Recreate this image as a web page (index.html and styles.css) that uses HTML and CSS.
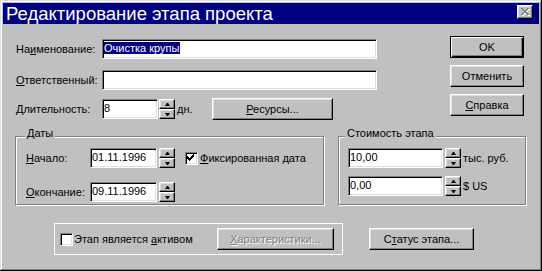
FILE: index.html
```html
<!DOCTYPE html>
<html>
<head>
  <meta charset="utf-8">
  <title>Редактирование этапа проекта</title>
  <link rel="stylesheet" href="styles.css">
</head>
<body>
  <div class="window">
    <div class="titlebar">
      <span class="title">Редактирование этапа проекта</span>
      <span class="close-btn">
        <svg width="14" height="12" viewBox="0 0 14 12" shape-rendering="crispEdges">
          <path fill="#fff" transform="translate(1,1)" d="M3 2h2v1h-2z M9 2h2v1h-2z M4 3h2v1h-2z M8 3h2v1h-2z M5 4h4v1h-4z M6 5h2v1h-2z M5 6h4v1h-4z M4 7h2v1h-2z M8 7h2v1h-2z M3 8h2v1h-2z M9 8h2v1h-2z"/>
          <path fill="#808080" d="M3 2h2v1h-2z M9 2h2v1h-2z M4 3h2v1h-2z M8 3h2v1h-2z M5 4h4v1h-4z M6 5h2v1h-2z M5 6h4v1h-4z M4 7h2v1h-2z M8 7h2v1h-2z M3 8h2v1h-2z M9 8h2v1h-2z"/>
        </svg>
      </span>
    </div>

    <div class="content">
      <div class="top">
        <div class="fields">
          <div class="row">
            <span class="label">На<u>и</u>менование:</span>
            <div class="field field-wide"><span class="sel">Очистка крупы</span></div>
          </div>
          <div class="row">
            <span class="label"><u>О</u>тветственный:</span>
            <div class="field field-wide"></div>
          </div>
          <div class="row row-tall">
            <span class="label"><u>Д</u>лительность:</span>
            <div class="field field-days">8</div>
            <div class="spin"><span class="spin-btn up"></span><span class="spin-btn down"></span></div>
            <span class="unit unit-days">дн.</span>
            <button class="btn btn-res"><span><u>Р</u>есурсы...</span></button>
          </div>
        </div>
        <div class="buttons">
          <button class="btn btn-default">OK</button>
          <button class="btn">Отменить</button>
          <button class="btn"><span><u>С</u>правка</span></button>
        </div>
      </div>

      <div class="groups">
        <div class="group group-dates">
          <div class="group-title">Даты</div>
          <div class="group-row first">
            <span class="glabel"><u>Н</u>ачало:</span>
            <div class="field field-date">01.11.1996</div>
            <div class="spin"><span class="spin-btn up"></span><span class="spin-btn down"></span></div>
            <span class="check checked">
              <svg width="11" height="11" viewBox="0 0 11 11" shape-rendering="crispEdges">
                <path fill="#000" d="M8 2h1v1h-1z M7 3h2v1h-2z M2 4h1v1h-1z M6 4h3v1h-3z M2 5h2v1h-2z M5 5h3v1h-3z M2 6h5v1h-5z M3 7h3v1h-3z M4 8h1v1h-1z"/>
              </svg>
            </span>
            <span class="check-text"><u>Ф</u>иксированная дата</span>
          </div>
          <div class="group-row second">
            <span class="glabel"><u>О</u>кончание:</span>
            <div class="field field-date">09.11.1996</div>
            <div class="spin"><span class="spin-btn up"></span><span class="spin-btn down"></span></div>
          </div>
        </div>

        <div class="group group-cost">
          <div class="group-title">Стоимость этапа</div>
          <div class="group-row first">
            <div class="field field-money">10,00</div>
            <div class="spin"><span class="spin-btn up"></span><span class="spin-btn down"></span></div>
            <span class="unit">тыс. руб.</span>
          </div>
          <div class="group-row first">
            <div class="field field-money">0,00</div>
            <div class="spin"><span class="spin-btn up"></span><span class="spin-btn down"></span></div>
            <span class="unit">$ US</span>
          </div>
        </div>
      </div>

      <div class="bottom">
        <div class="frame">
          <span class="check"></span>
          <span class="check-text">Этап является <u>а</u>ктивом</span>
          <button class="btn btn-disabled btn-char"><span><u>Х</u>арактеристики...</span></button>
        </div>
        <button class="btn btn-status"><span>С<u>т</u>атус этапа...</span></button>
      </div>
    </div>
  </div>
</body>
</html>
```

FILE: styles.css
```css
body { margin: 0; font-family: "Liberation Sans", Arial, sans-serif; font-size: 11px; color: #000; background: #c0c0c0; }

.window {
  width: 542px;
  height: 271px;
  box-sizing: border-box;
  padding: 3px;
  background: #c0c0c0;
  box-shadow: inset -1px -1px #000, inset 1px 1px #dfdfdf, inset -2px -2px #808080, inset 2px 2px #fff;
}

/* title bar */
.titlebar { height: 21px; background: #000080; color: #fff; display: flex; align-items: flex-start; }
.title { font-size: 18.5px; line-height: 21px; padding-left: 3px; white-space: nowrap; }
.close-btn {
  margin: 2px 6px 0 auto;
  width: 16px;
  height: 14px;
  box-sizing: border-box;
  background: #c0c0c0;
  border: 1px solid;
  border-color: #fff #000 #000 #fff;
  box-shadow: inset -1px -1px #808080, inset 1px 1px #dfdfdf;
}
.close-btn svg { display: block; }

.content { padding: 0 13px 0 12px; }

/* top part: fields + dialog buttons */
.top { display: flex; justify-content: space-between; align-items: flex-start; margin-top: 12px; }
.fields { width: 362px; padding-top: 3px; }
.row { display: flex; align-items: center; height: 20px; }
.row + .row { margin-top: 11px; }
.row.row-tall { height: 22px; margin-top: 8px; }
.label { width: 87px; padding-left: 1px; box-sizing: border-box; white-space: nowrap; }

.field {
  height: 20px;
  box-sizing: border-box;
  background: #fff;
  border: 1px solid;
  border-color: #808080 #fff #fff #808080;
  box-shadow: inset 1px 1px #000, inset -1px -1px #dfdfdf;
  padding: 0 0 0 1px;
  line-height: 17px;
  white-space: nowrap;
  overflow: hidden;
  flex: none;
}
.field-wide { width: 275px; }
.field-days { width: 56px; }
.field-date { width: 67px; }
.field-money { width: 95px; }
.sel { background: #000080; color: #fff; padding-right: 1px; }

.spin { width: 16px; height: 20px; display: flex; flex-direction: column; margin-left: 2px; flex: none; }
.field-days + .spin { margin-left: 1px; }
.spin-btn {
  flex: 1;
  box-sizing: border-box;
  background: #c0c0c0;
  border: 1px solid;
  border-color: #fff #000 #000 #fff;
  box-shadow: inset -1px -1px #808080, inset 1px 1px #dfdfdf;
  display: flex;
  align-items: center;
  justify-content: center;
}
.spin-btn::after { content: ""; width: 1px; height: 0; border-left: 2px solid transparent; border-right: 2px solid transparent; }
.spin-btn.up::after { border-bottom: 3px solid #000; }
.spin-btn.down::after { border-top: 3px solid #000; }

.unit { margin-left: 2px; white-space: nowrap; }
.unit-days { width: 35px; }

.btn {
  height: 22px;
  box-sizing: border-box;
  background: #c0c0c0;
  border: 1px solid;
  border-color: #fff #000 #000 #fff;
  box-shadow: inset -1px -1px #808080, inset 1px 1px #dfdfdf;
  font: inherit;
  color: #000;
  padding: 0;
  display: flex;
  align-items: center;
  justify-content: center;
  flex: none;
}
.btn-default { border-color: #000; box-shadow: inset 1px 1px #fff, inset -1px -1px #000, inset -2px -2px #808080; }
.btn-disabled { color: #808080; text-shadow: 1px 1px #fff; }
.btn-res { width: 121px; }

.buttons { display: flex; flex-direction: column; gap: 7px; margin-right: 2px; }
.buttons .btn { width: 74px; }

/* group boxes */
.groups { display: flex; gap: 14px; margin-top: 16px; }
.group {
  height: 69px;
  box-sizing: border-box;
  border: 1px solid #808080;
  box-shadow: inset 1px 1px #fff, 1px 1px #fff;
}
.group-dates { width: 309px; }
.group-cost { width: 188px; }
.group-title { width: max-content; margin: -10px 0 0 9px; padding: 0 2px; background: #c0c0c0; line-height: 13px; }
.group-cost .group-title { margin-left: 6px; }

.group-row { display: flex; align-items: center; height: 20px; padding-left: 9px; }
.group-row.first { margin-top: 8px; }
.group-row.second { margin-top: 14px; }
.glabel { width: 64px; white-space: nowrap; }
.group-dates .group-row { padding-left: 10px; }

.check {
  width: 13px;
  height: 13px;
  box-sizing: border-box;
  background: #fff;
  border: 1px solid;
  border-color: #808080 #fff #fff #808080;
  box-shadow: inset 1px 1px #000, inset -1px -1px #dfdfdf;
  flex: none;
}
.check svg { display: block; margin: -1px 0 0 -1px; }
.group-row .check { margin-left: 10px; }
.check-text { margin-left: 2px; white-space: nowrap; }

/* bottom line */
.bottom { display: flex; align-items: flex-start; margin-top: 18px; padding-left: 39px; }
.frame {
  width: 289px;
  box-sizing: border-box;
  display: flex;
  align-items: center;
  border: 1px solid #fff;
  padding: 4px 8px 4px 5px;
}
.frame .check-text { margin-left: 1px; }
.btn-char { width: 117px; margin-left: auto; }
.btn-status { width: 105px; margin: 5px 0 0 26px; }
```
